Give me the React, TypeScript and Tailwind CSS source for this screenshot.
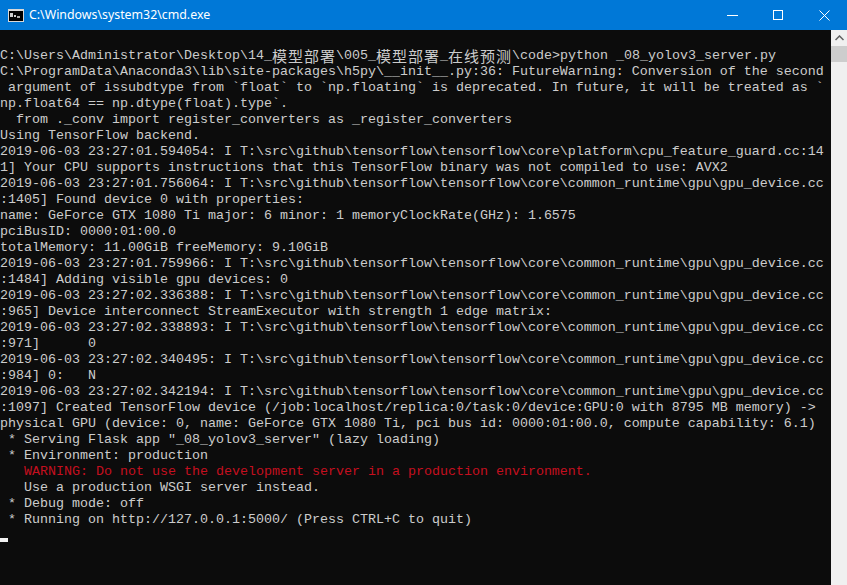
import React from "react";

const lines = [
  "C:\\Users\\Administrator\\Desktop\\14_模型部署\\005_模型部署_在线预测\\code>python _08_yolov3_server.py",
  "C:\\ProgramData\\Anaconda3\\lib\\site-packages\\h5py\\__init__.py:36: FutureWarning: Conversion of the second",
  " argument of issubdtype from `float` to `np.floating` is deprecated. In future, it will be treated as `",
  "np.float64 == np.dtype(float).type`.",
  "  from ._conv import register_converters as _register_converters",
  "Using TensorFlow backend.",
  "2019-06-03 23:27:01.594054: I T:\\src\\github\\tensorflow\\tensorflow\\core\\platform\\cpu_feature_guard.cc:14",
  "1] Your CPU supports instructions that this TensorFlow binary was not compiled to use: AVX2",
  "2019-06-03 23:27:01.756064: I T:\\src\\github\\tensorflow\\tensorflow\\core\\common_runtime\\gpu\\gpu_device.cc",
  ":1405] Found device 0 with properties:",
  "name: GeForce GTX 1080 Ti major: 6 minor: 1 memoryClockRate(GHz): 1.6575",
  "pciBusID: 0000:01:00.0",
  "totalMemory: 11.00GiB freeMemory: 9.10GiB",
  "2019-06-03 23:27:01.759966: I T:\\src\\github\\tensorflow\\tensorflow\\core\\common_runtime\\gpu\\gpu_device.cc",
  ":1484] Adding visible gpu devices: 0",
  "2019-06-03 23:27:02.336388: I T:\\src\\github\\tensorflow\\tensorflow\\core\\common_runtime\\gpu\\gpu_device.cc",
  ":965] Device interconnect StreamExecutor with strength 1 edge matrix:",
  "2019-06-03 23:27:02.338893: I T:\\src\\github\\tensorflow\\tensorflow\\core\\common_runtime\\gpu\\gpu_device.cc",
  ":971]      0",
  "2019-06-03 23:27:02.340495: I T:\\src\\github\\tensorflow\\tensorflow\\core\\common_runtime\\gpu\\gpu_device.cc",
  ":984] 0:   N",
  "2019-06-03 23:27:02.342194: I T:\\src\\github\\tensorflow\\tensorflow\\core\\common_runtime\\gpu\\gpu_device.cc",
  ":1097] Created TensorFlow device (/job:localhost/replica:0/task:0/device:GPU:0 with 8795 MB memory) ->",
  "physical GPU (device: 0, name: GeForce GTX 1080 Ti, pci bus id: 0000:01:00.0, compute capability: 6.1)",
  ' * Serving Flask app "_08_yolov3_server" (lazy loading)',
  " * Environment: production",
  "   WARNING: Do not use the development server in a production environment.",
  "   Use a production WSGI server instead.",
  " * Debug mode: off",
  " * Running on http://127.0.0.1:5000/ (Press CTRL+C to quit)",
];

// CJK glyphs take two console cells (16px), latin ones a single 8px cell
function ConsoleLine({ text }: { text: string }) {
  const parts = text.split(/([\u4e00-\u9fff]+)/);
  return (
    <>
      {parts.map((part, i) =>
        i % 2 === 1 ? (
          <span key={i} className="h-4 text-[15px] leading-[15px] tracking-[1px] font-['Noto_Sans_CJK_SC',sans-serif]">
            {part}
          </span>
        ) : (
          <span key={i} className="h-4">{part}</span>
        )
      )}
    </>
  );
}

export default function App() {
  return (
    <div className="h-[585px] w-[847px] flex flex-col overflow-hidden bg-[#0c0c0c]">
      {/* Title bar */}
      <div className="h-[30px] flex items-center bg-[#0078d7] text-white">
        <svg width="16" height="13" viewBox="0 0 16 13" className="ml-2">
          <rect width="16" height="13" fill="#d8d8d8" />
          <rect x="1" y="2" width="14" height="10" fill="#000" />
          <rect x="2" y="4" width="3" height="4" fill="#ccc" />
          <rect x="6" y="6" width="2" height="2" fill="#ccc" />
          <rect x="9" y="7" width="3" height="2" fill="#aaa" />
        </svg>
        <span className="ml-[5px] text-[12.35px] font-['Noto_Sans','Liberation_Sans',sans-serif]">C:\Windows\system32\cmd.exe</span>
        <div className="ml-auto flex h-full">
          <div className="w-[46px] flex items-center justify-center">
            <div className="w-[11px] h-px bg-white" />
          </div>
          <div className="w-[46px] flex items-center justify-center">
            <div className="w-[10px] h-[10px] border border-white" />
          </div>
          <div className="w-[46px] flex items-center justify-center">
            <svg width="11" height="11" viewBox="0 0 11 11" stroke="white" strokeWidth="1">
              <path d="M0.5 0.5 L10.5 10.5 M10.5 0.5 L0.5 10.5" />
            </svg>
          </div>
        </div>
      </div>

      <div className="flex-1 flex min-h-0">
        {/* Console text */}
        <div className="flex-1 pt-[18px] font-['Liberation_Mono','Noto_Sans_CJK_SC',monospace] text-[13.33px] leading-[16px] text-[#cccccc] whitespace-pre">
          {lines.map((line, i) => (
            <div key={i} className={i === 26 ? "h-4 flex text-[#c50f1f]" : "h-4 flex"}>
              <ConsoleLine text={line} />
            </div>
          ))}
          <div className="h-4 flex items-end pb-[2px]">
            <div className="w-2 h-1 bg-[#f2f2f2]" />
          </div>
        </div>

        {/* Scrollbar, the window is cropped before the down arrow */}
        <div className="w-4 bg-[#f0f0f0] flex flex-col">
          <div className="h-4 flex items-center justify-center">
            <svg width="9" height="6" viewBox="0 0 9 6" fill="none" stroke="#606060" strokeWidth="1.5">
              <path d="M0.5 5 L4.5 1 L8.5 5" />
            </svg>
          </div>
          <div className="h-4 bg-[#cdcdcd]" />
        </div>
      </div>
    </div>
  );
}
